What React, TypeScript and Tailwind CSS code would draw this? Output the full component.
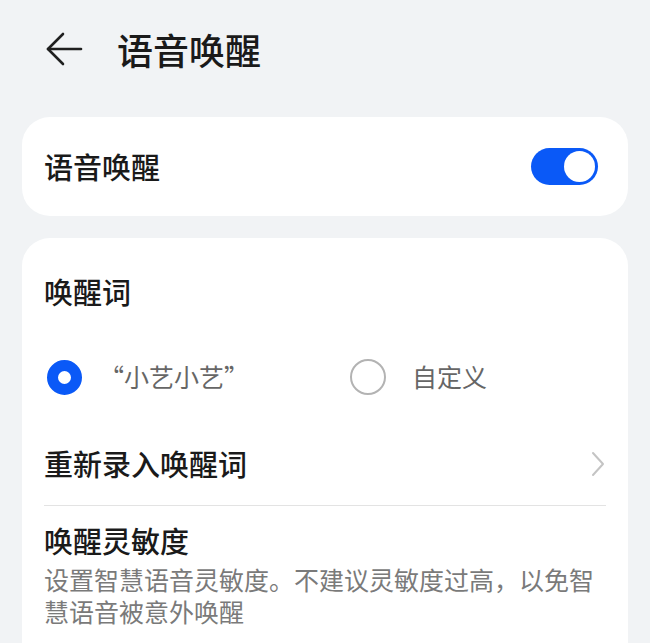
import React, { useState } from 'react';

const font = { fontFamily: '"Noto Sans CJK SC", "Noto Sans", sans-serif' };

function BackArrow() {
  return (
    <svg width="37" height="34" viewBox="0 0 37 34" fill="none" stroke="#1f1f1f" strokeWidth="2.6" strokeLinecap="round" strokeLinejoin="round">
      <path d="M35 17H2" />
      <path d="M17 2L2 17l15 15" />
    </svg>
  );
}

function Toggle({ on, onChange }: { on: boolean; onChange: () => void }) {
  return (
    <button
      onClick={onChange}
      className={`flex h-[37px] w-[67px] items-center rounded-full p-[3px] ${on ? 'justify-end bg-[#0a59f7]' : 'justify-start bg-[#d5d7db]'}`}
    >
      <span className="block h-[31px] w-[31px] rounded-full bg-white" />
    </button>
  );
}

function Radio({ checked }: { checked: boolean }) {
  return checked ? (
    <span className="box-border block h-[35px] w-[35px] rounded-full border-[11px] border-[#0a59f7] bg-white" />
  ) : (
    <span className="box-border block h-[36px] w-[36px] rounded-full border-2 border-[#b3b3b3] bg-white" />
  );
}

export default function App() {
  const [enabled, setEnabled] = useState(true);
  const [word, setWord] = useState<'default' | 'custom'>('default');

  return (
    <div className="h-[643px] w-[650px] overflow-hidden bg-[#f1f3f5]" style={font}>
      {/* 顶部标题栏 */}
      <div className="flex h-[98px] items-center">
        <div className="ml-[46px] flex w-[71px] items-center">
          <BackArrow />
        </div>
        <h1 className="text-[36px] font-medium leading-none text-[#1a1a1a]">语音唤醒</h1>
      </div>

      <div className="px-[22px] pt-[19px]">
        {/* 开关卡片 */}
        <div className="flex h-[99px] items-center justify-between rounded-[28px] bg-white pl-[22px] pr-[30px]">
          <span className="text-[29px] font-medium text-[#1a1a1a]">语音唤醒</span>
          <Toggle on={enabled} onChange={() => setEnabled(!enabled)} />
        </div>

        {/* 唤醒词卡片 */}
        <div className="mt-[22px] rounded-t-[28px] bg-white px-[22px] pb-[40px]">
          <div className="flex h-[108px] items-center">
            <span className="text-[29px] font-medium text-[#1a1a1a]">唤醒词</span>
          </div>

          <div className="flex h-[62px] items-center">
            <button onClick={() => setWord('default')} className="flex w-[306px] items-center">
              <span className="ml-[3px]"><Radio checked={word === 'default'} /></span>
              <span className="ml-[17px] text-[25px] text-[#666666]">“小艺小艺”</span>
            </button>
            <button onClick={() => setWord('custom')} className="flex items-center">
              <Radio checked={word === 'custom'} />
              <span className="ml-[26px] text-[25px] text-[#666666]">自定义</span>
            </button>
          </div>

          <div className="flex h-[97px] items-center justify-between pt-[14px]">
            <span className="text-[29px] font-medium text-[#1a1a1a]">重新录入唤醒词</span>
            <svg width="14" height="26" viewBox="0 0 14 26" fill="none" stroke="#c4c4c4" strokeWidth="2" strokeLinecap="round" strokeLinejoin="round" className="mr-[1px]">
              <path d="M2 2l10 11L2 24" />
            </svg>
          </div>

          <div className="h-px bg-[#e3e3e3]" />

          <div className="pt-[16px]">
            <div className="text-[29px] font-medium leading-[36px] text-[#1a1a1a]">唤醒灵敏度</div>
            <p className="mt-[5px] text-[25px] leading-[32px] text-[#7a7a7a]">
              设置智慧语音灵敏度。不建议灵敏度过高，以免智慧语音被意外唤醒
            </p>
          </div>
        </div>
      </div>
    </div>
  );
}
